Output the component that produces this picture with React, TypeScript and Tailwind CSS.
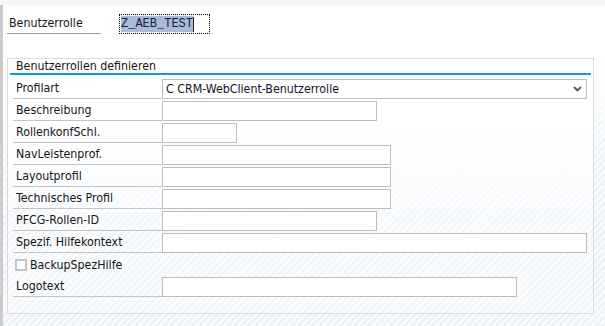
import React from "react";

const font = "font-['DejaVu_Sans_Condensed','DejaVu_Sans',sans-serif]";

function Row({ label, width, children }: { label: string; width?: number; children?: React.ReactNode }) {
  return (
    <div className="flex h-[20px] items-stretch">
      <div className="w-[149px] border-b border-[#c4c4c4] pl-[3px] text-[12.3px] leading-[19px] text-[#161616]">{label}</div>
      {children ?? (
        <div className="border border-[#bdbdbd] bg-white" style={{ width }} />
      )}
    </div>
  );
}

export default function App() {
  return (
    <div
      className={`${font} relative h-[326px] w-[605px] overflow-hidden bg-[linear-gradient(to_bottom,#ffffff_0%,#ffffff_18%,rgba(255,255,255,0)_55%),repeating-linear-gradient(135deg,#ebf1f6_0px,#ebf1f6_2px,#f8fafc_2px,#f8fafc_5px)]`}
    >
      <div className="h-[5px] bg-[#f6f6f6]" />
      <div className="flex h-[321px]">
        <div className="w-[3px] bg-[#cbcbcb]" />
        <div className="flex-1 pl-[4px]">
          {/* header */}
          <div className="mt-[9px] flex h-[20px] items-stretch">
            <div className="w-[94px] border-b border-[#9a9a9a] pl-[2px] text-[12.3px] leading-[19px] text-[#161616]">Benutzerrolle</div>
            <div className="ml-[18px] flex w-[91px] items-center border border-dotted border-black pl-[1px]">
              <span className="bg-[#a6bcd8] font-['Liberation_Mono',monospace] text-[12px] leading-[16px] text-[#1a1a3a]">Z_AEB_TEST</span>
              <span className="h-[15px] w-[1px] bg-[#222]" />
            </div>
          </div>
          {/* group box */}
          <div className="mt-[24px] h-[256px] w-[587px] border border-[#dcdcdc] bg-[linear-gradient(to_bottom,#ffffff_0%,#ffffff_25%,rgba(255,255,255,0.35)_70%)]">
            <div className="mx-[2px] h-[16px] border-b-2 border-[#0b9bd8] pl-[6px] text-[12.3px] leading-[14px] text-[#161616]">
              Benutzerrollen definieren
            </div>
            <div className="mt-[4px] flex flex-col gap-[2px] pl-[5px]">
              <Row label="Profilart">
                <div className="relative flex w-[425px] items-center border border-[#bdbdbd] bg-white pl-[3px] text-[12.3px] text-[#14142a]">
                  C CRM-WebClient-Benutzerrolle
                  <svg className="absolute right-[4px] top-[6px]" width="9" height="6" viewBox="0 0 9 6">
                    <path d="M1 1 L4.5 4.5 L8 1" fill="none" stroke="#555" strokeWidth="1.8" />
                  </svg>
                </div>
              </Row>
              <Row label="Beschreibung" width={215} />
              <Row label="RollenkonfSchl." width={75} />
              <Row label="NavLeistenprof." width={229} />
              <Row label="Layoutprofil" width={229} />
              <Row label="Technisches Profil" width={229} />
              <Row label="PFCG-Rollen-ID" width={215} />
              <Row label="Spezif. Hilfekontext" width={425} />
              <div className="flex h-[20px] items-center">
                <div className="ml-[2px] h-[12px] w-[12px] border-2 border-[#c4c4c4] bg-white" />
                <span className="ml-[3px] text-[12.3px] text-[#161616]">BackupSpezHilfe</span>
              </div>
              <Row label="Logotext" width={355} />
            </div>
          </div>
        </div>
      </div>
    </div>
  );
}
